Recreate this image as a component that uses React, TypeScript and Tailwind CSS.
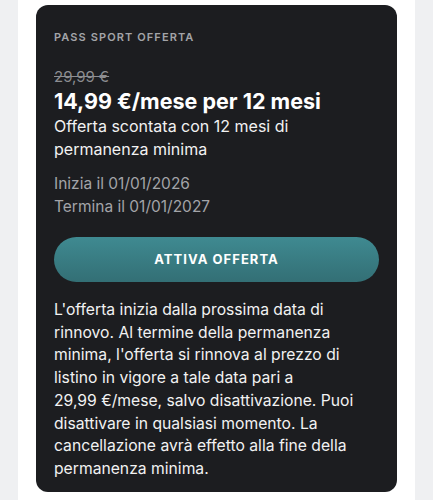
export default function App() {
  return (
    <div className="min-h-[500px] bg-[#eff0f2] flex justify-center" style={{ fontFamily: "Inter, 'Noto Sans', sans-serif" }}>
      <div className="w-[397px] bg-white px-[18px] pt-[5px] pb-[7px]">
        <div className="bg-[#1c1d20] rounded-[12px] px-[18px] pt-[24px] pb-[11px] text-white">
          <div className="text-[11px] font-semibold tracking-[0.1em] text-[#a3a4a8] leading-[16px]">PASS SPORT OFFERTA</div>
          <div className="mt-[22px] text-[15px] leading-[20px] text-[#8c8d91] line-through">29,99 €</div>
          <div className="text-[21.5px] font-bold leading-[28px]">14,99 €/mese per 12 mesi</div>
          <div className="text-[16px] leading-[23px] text-[#f2f2f2]">Offerta scontata con 12 mesi di permanenza minima</div>
          <div className="mt-[11px] text-[15.5px] leading-[23px] text-[#a3a4a8]">
            <div>Inizia il 01/01/2026</div>
            <div>Termina il 01/01/2027</div>
          </div>
          <button className="mt-[19px] w-full h-[45px] rounded-full bg-gradient-to-b from-[#3f8a91] to-[#336f75] text-white text-[13px] font-bold tracking-[0.08em]">
            ATTIVA OFFERTA
          </button>
          <p className="mt-[17px] text-[15.7px] leading-[22.7px] text-[#f2f2f2]">
            L'offerta inizia dalla prossima data di rinnovo. Al termine della permanenza minima, l'offerta si rinnova al prezzo di listino in vigore a tale data pari a 29,99&nbsp;€/mese, salvo disattivazione. Puoi disattivare in qualsiasi momento. La cancellazione avrà effetto alla fine della permanenza minima.
          </p>
        </div>
      </div>
    </div>
  );
}
